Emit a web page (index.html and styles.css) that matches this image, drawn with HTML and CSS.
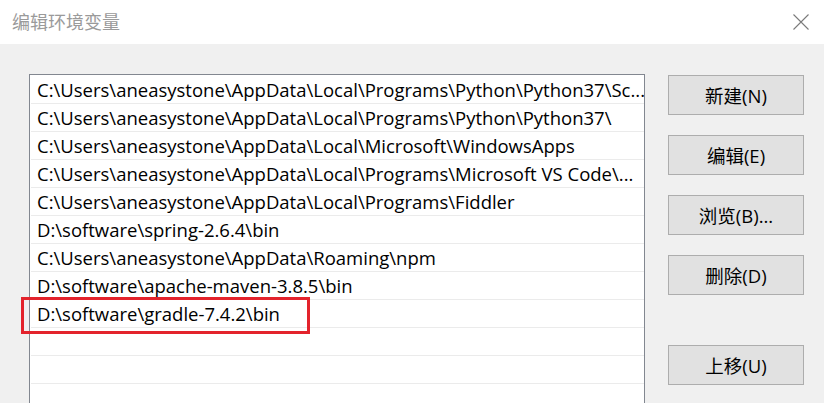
FILE: index.html
```html
<!DOCTYPE html>
<html lang="zh-CN">
<head>
<meta charset="utf-8">
<title>编辑环境变量</title>
<link rel="stylesheet" href="styles.css">
</head>
<body>
<div class="dialog">
  <div class="titlebar">
    <span class="title">编辑环境变量</span>
    <svg class="close" width="16" height="16" viewBox="0 0 16 16"><path d="M0.5 0.5 L15.5 15.5 M15.5 0.5 L0.5 15.5" stroke="#7a7a7a" stroke-width="1.1" fill="none"/></svg>
  </div>
  <div class="body">
    <div class="listbox">
      <div class="row">C:\Users\aneasystone\AppData\Local\Programs\Python\Python37\Sc...</div>
      <div class="row">C:\Users\aneasystone\AppData\Local\Programs\Python\Python37\</div>
      <div class="row">C:\Users\aneasystone\AppData\Local\Microsoft\WindowsApps</div>
      <div class="row">C:\Users\aneasystone\AppData\Local\Programs\Microsoft VS Code\...</div>
      <div class="row">C:\Users\aneasystone\AppData\Local\Programs\Fiddler</div>
      <div class="row">D:\software\spring-2.6.4\bin</div>
      <div class="row">C:\Users\aneasystone\AppData\Roaming\npm</div>
      <div class="row">D:\software\apache-maven-3.8.5\bin</div>
      <div class="row">D:\software\gradle-7.4.2\bin</div>
      <div class="row"></div>
      <div class="row"></div>
      <div class="row"></div>
    </div>
    <div class="buttons">
      <div class="btn">新建(N)</div>
      <div class="btn">编辑(E)</div>
      <div class="btn">浏览(B)...</div>
      <div class="btn">删除(D)</div>
      <div class="btn btn-gap">上移(U)</div>
    </div>
    <div class="highlight"></div>
  </div>
</div>
</body>
</html>
```
FILE: styles.css
```css
html, body {
  margin: 0;
  padding: 0;
}
body {
  width: 824px;
  height: 403px;
  overflow: hidden;
  background: #f0f0f0;
  font-family: "Open Sans", "Noto Sans CJK SC", sans-serif;
}
.dialog {
  display: flex;
  flex-direction: column;
  height: 403px;
}
.titlebar {
  height: 44px;
  background: #ffffff;
  display: flex;
  align-items: center;
  justify-content: space-between;
  padding: 0 15px 0 12px;
  flex-shrink: 0;
}
.title {
  font-family: "Noto Sans CJK SC", sans-serif;
  font-size: 18px;
  color: #9a9a9a;
  line-height: 1;
  margin-top: -2px;
}
.close {
  display: block;
  margin-top: -1px;
}
.body {
  position: relative;
  flex: 1;
  display: flex;
  align-items: flex-start;
  gap: 23px;
  padding: 30px 0 0 29px;
  overflow: hidden;
}
.listbox {
  width: 613px;
  border: 1px solid #828790;
  background: #ffffff;
  padding: 1px 0 0 1px;
  flex-shrink: 0;
}
.row {
  height: 27px;
  line-height: 27px;
  border-bottom: 1px solid #ebebeb;
  padding-left: 6px;
  font-size: 18.5px;
  color: #000;
  white-space: nowrap;
  overflow: hidden;
}
.buttons {
  display: flex;
  flex-direction: column;
  gap: 20px;
  padding-top: 1px;
}
.btn {
  width: 134px;
  height: 38px;
  border: 1px solid #adadad;
  background: #e1e1e1;
  display: flex;
  align-items: center;
  justify-content: center;
  font-size: 18.5px;
  color: #000;
}
.btn-gap {
  margin-top: 30px;
}
.highlight {
  position: absolute;
  left: 21px;
  top: 253px;
  width: 283px;
  height: 31px;
  border: 3px solid #e3232c;
}
```
